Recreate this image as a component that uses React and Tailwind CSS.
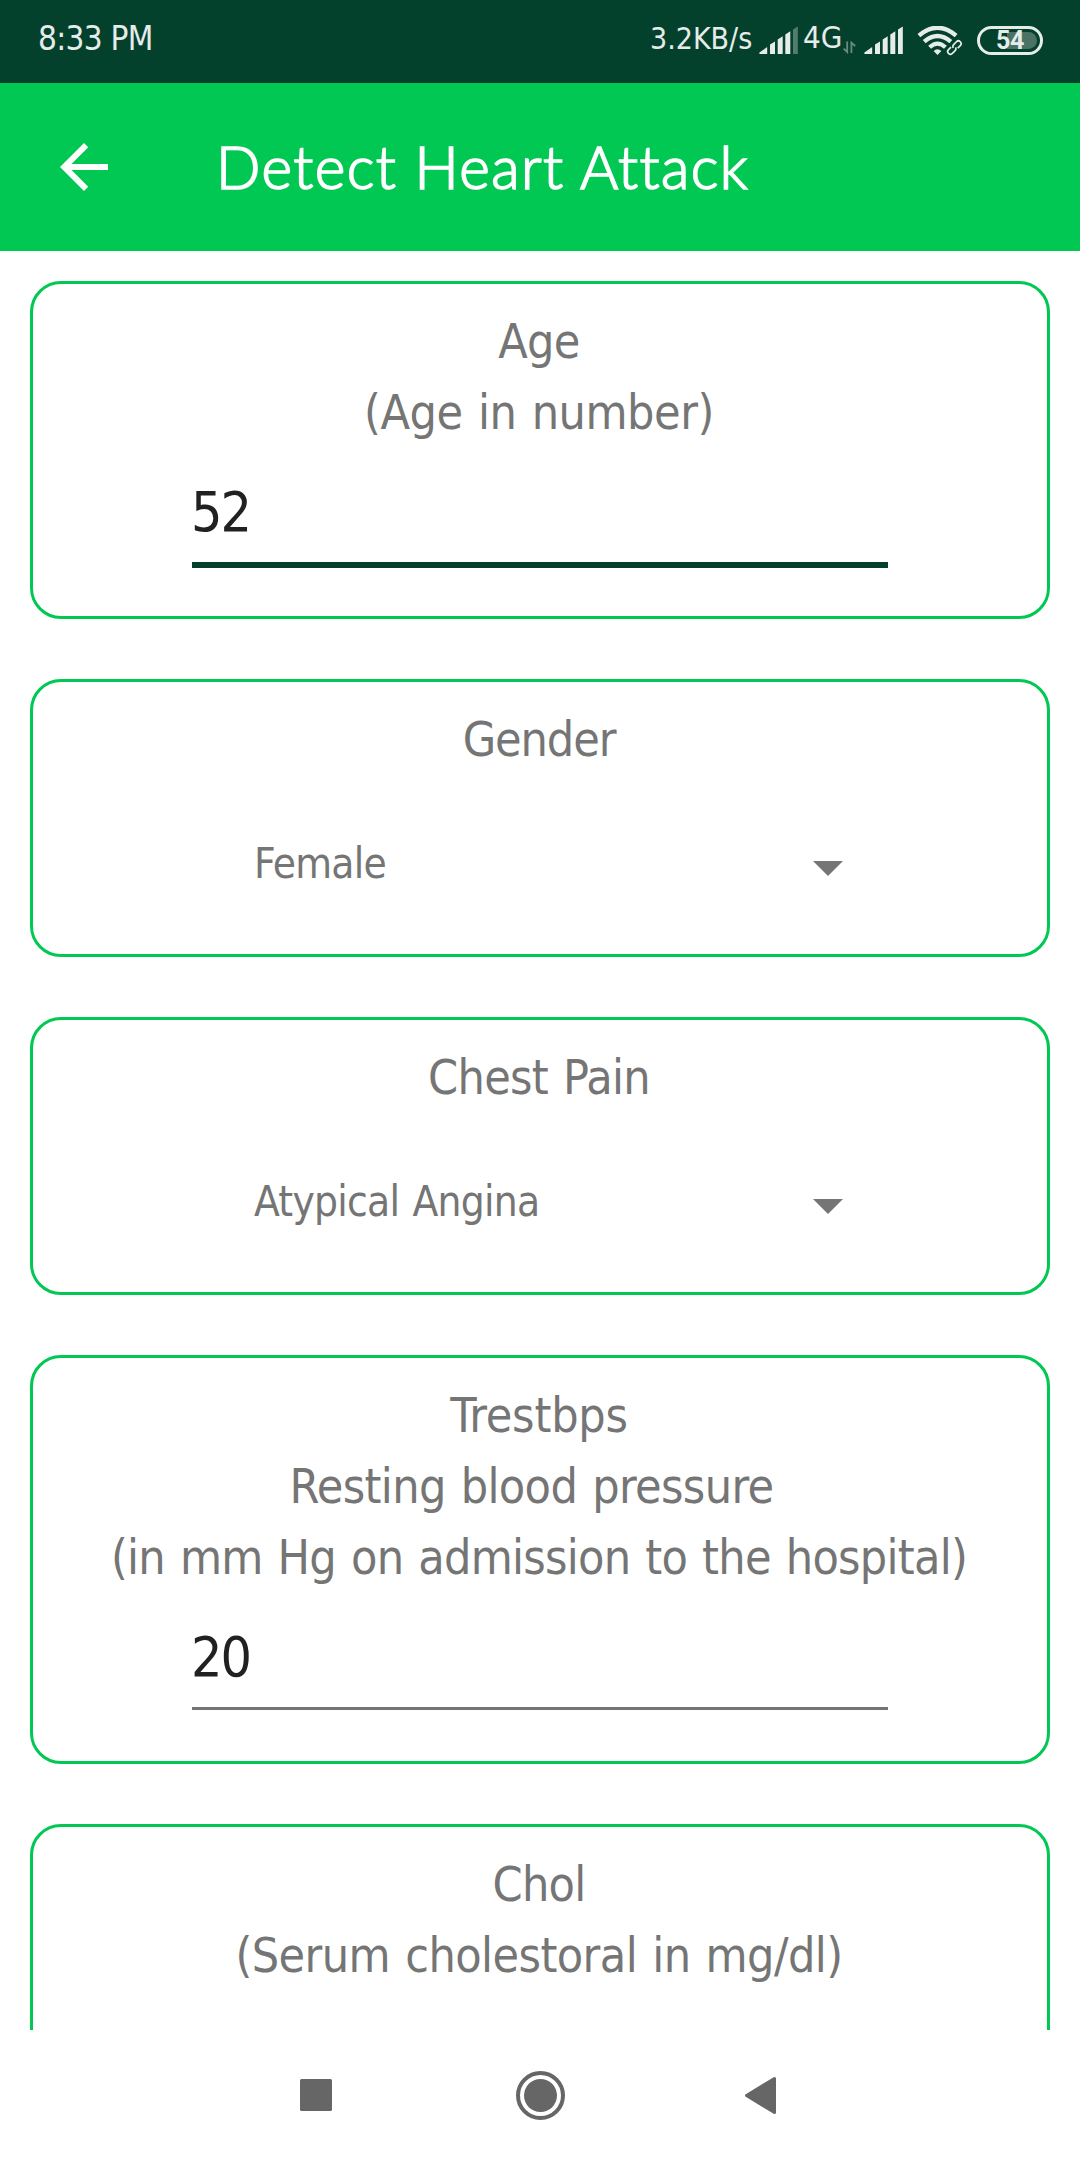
import React from 'react';

function Signal({ weak }) {
  return (
    <svg className="mt-[26px] h-[29px] w-[40px] shrink-0" viewBox="0 0 40 29" fill="#e6ecea">
      <path d="M0.4 28v-1.4L8.2 21v7z" />
      <path d="M11 28V18.6L16 15.4V28z" />
      <path d="M18.7 28V13.6L23.7 10.2V28z" />
      <path d="M26.3 28V8.6L31.3 5.2V28z" />
      <path d="M34 28V3.4L38.8 0.6V28z" opacity={weak ? 0.35 : 1} />
    </svg>
  );
}

function StatusBar() {
  return (
    <header className="flex h-[83px] items-start bg-[#04412c] pl-[38px] text-[#e6ecea]">
      <span className="text-[33px] leading-[78px] tracking-[-0.7px]">8:33 PM</span>
      <div className="ml-auto flex items-start pr-[37px]">
        <span className="w-[109px] whitespace-nowrap text-[30px] leading-[77px]">3.2KB/s</span>
        <Signal weak />
        <span className="ml-1 w-[40px] text-[31px] leading-[75px]">4G</span>
        <svg className="mt-[41px] h-[13px] w-[13px]" viewBox="0 0 13 13" fill="none" stroke="#688d80" strokeWidth="1.8">
          <path d="M4.2 0.5V11L0.6 7.6M8.4 12V1.6L12.2 5" />
        </svg>
        <span className="w-2" />
        <Signal />
        <svg className="ml-[13px] mt-[26px] h-[30px] w-[46px]" viewBox="0 0 46 30" fill="none" stroke="#e6ecea">
          <path d="M1.9 9.6Q20.5 -6 39.1 9.6" strokeWidth="4.4" />
          <path d="M7.2 15.6Q20.5 4.4 33.8 15.6" strokeWidth="4.4" />
          <path d="M12.6 21.2Q20.5 14 28.4 21.2" strokeWidth="4.2" />
          <path d="M16.6 25Q20.5 21.6 24.4 25L20.5 29z" fill="#e6ecea" stroke="none" />
          <g transform="translate(37.4 21.6) rotate(-45)">
            <rect x="-10" y="-4.6" width="20" height="9.2" fill="#04412c" stroke="none" />
            <path
              d="M-2 -2.7H-5.6A2.7 2.7 0 0 0 -5.6 2.7H-2Q0.4 2.7 1 0.6M2 2.7H5.6A2.7 2.7 0 0 0 5.6 -2.7H2Q-0.4 -2.7 -1 -0.6"
              strokeWidth="1.7"
            />
          </g>
        </svg>
        <div className="ml-[14px] mt-[26px] flex h-[29px] w-[66px] items-center justify-end rounded-full border-[3px] border-[#e6ecea] pr-[3px]">
          <div className="h-[17px] w-[30px] rounded-r-full bg-[#4a7365]" />
          <span className="absolute mr-[13px] font-['Roboto'] text-[25px] font-bold leading-[29px] tracking-[-0.4px]">54</span>
        </div>
      </div>
    </header>
  );
}

function Card({ lines, className, children }) {
  return (
    <section className={`w-full shrink-0 rounded-[31px] border-[3px] border-[#00c853] pt-[22px] ${className}`}>
      {lines.map(([text, tracking]) => (
        <p
          key={text}
          className={`whitespace-pre pr-[2px] text-center text-[48px] leading-[71px] [word-spacing:2px] ${tracking}`}
        >
          {text}
        </p>
      ))}
      {children}
    </section>
  );
}

function Field({ value, focused }) {
  return (
    <div
      className={`ml-[159px] mt-[29px] w-[696px] text-[55px] leading-[71px] tracking-[-2px] text-[#212121] ${
        focused ? 'h-[91px] border-b-[6px] border-[#04412c]' : 'h-[88px] border-b-[3px] border-[#757575]'
      }`}
    >
      <span className="-ml-px">{value}</span>
    </div>
  );
}

function Select({ value }) {
  return (
    <div className="ml-[221px] mt-[59px] flex h-[60px] w-[589px] items-center justify-between">
      <span className="text-[42px] leading-[60px] tracking-[-0.75px] [word-spacing:2px]">{value}</span>
      <svg className="mt-[8px] h-[15px] w-[30px]" viewBox="0 0 30 15" fill="#757575">
        <path d="M0 0H30L15 15z" />
      </svg>
    </div>
  );
}

export default function App() {
  return (
    <div className="flex h-[2160px] w-[1080px] flex-col overflow-hidden bg-white font-['DejaVu_Sans_Condensed','DejaVu_Sans',sans-serif] text-[#757575]">
      <StatusBar />
      <div className="flex h-[168px] shrink-0 items-start bg-[#00c853] text-white">
        <svg className="ml-[48px] mt-[48px] h-[72px] w-[72px]" viewBox="0 0 24 24" fill="currentColor">
          <path d="M20 11H7.83l5.59-5.59L12 4l-8 8 8 8 1.41-1.41L7.83 13H20v-2z" />
        </svg>
        <h1 className="ml-[96px] font-['Lato'] text-[58.5px] font-light leading-[166px] tracking-[1.45px] [-webkit-text-stroke:1.7px_white]">
          Detect Heart Attack
        </h1>
      </div>
      <main className="flex h-[1779px] shrink-0 flex-col gap-[60px] overflow-hidden px-[30px] pt-[30px]">
        <Card className="h-[338px]" lines={[['Age', 'tracking-[-0.7px]'], ['(Age in number)', 'tracking-[-0.45px]']]}>
          <Field value="52" focused />
        </Card>
        <Card className="h-[278px]" lines={[['Gender', 'tracking-[-1.1px]']]}>
          <Select value="Female" />
        </Card>
        <Card className="h-[278px]" lines={[['Chest Pain', 'tracking-[-0.7px]']]}>
          <Select value="Atypical Angina" />
        </Card>
        <Card
          className="h-[409px]"
          lines={[
            ['Trestbps', 'tracking-[-0.2px]'],
            ['Resting blood pressure ', 'tracking-[-0.65px]'],
            ['(in mm Hg on admission to the hospital)', 'tracking-[-0.74px]'],
          ]}
        >
          <Field value="20" />
        </Card>
        <Card
          className="h-[409px]"
          lines={[['Chol', 'tracking-[-0.7px]'], ['(Serum cholestoral in mg/dl)', 'tracking-[-0.57px]']]}
        />
      </main>
      <nav className="flex h-[130px] shrink-0 items-center pl-[300px] text-[#666666]">
        <svg className="mt-px h-[49px] w-[480px]" viewBox="0 0 480 49" fill="currentColor">
          <rect x="0" y="8" width="32" height="32" rx="1.5" />
          <circle cx="240.5" cy="24.5" r="16.5" />
          <circle cx="240.5" cy="24.5" r="22.5" fill="none" stroke="currentColor" strokeWidth="4" />
          <path d="M446.5 24.5L474.5 7.5V41.5z" stroke="currentColor" strokeWidth="3" strokeLinejoin="round" />
        </svg>
      </nav>
    </div>
  );
}
